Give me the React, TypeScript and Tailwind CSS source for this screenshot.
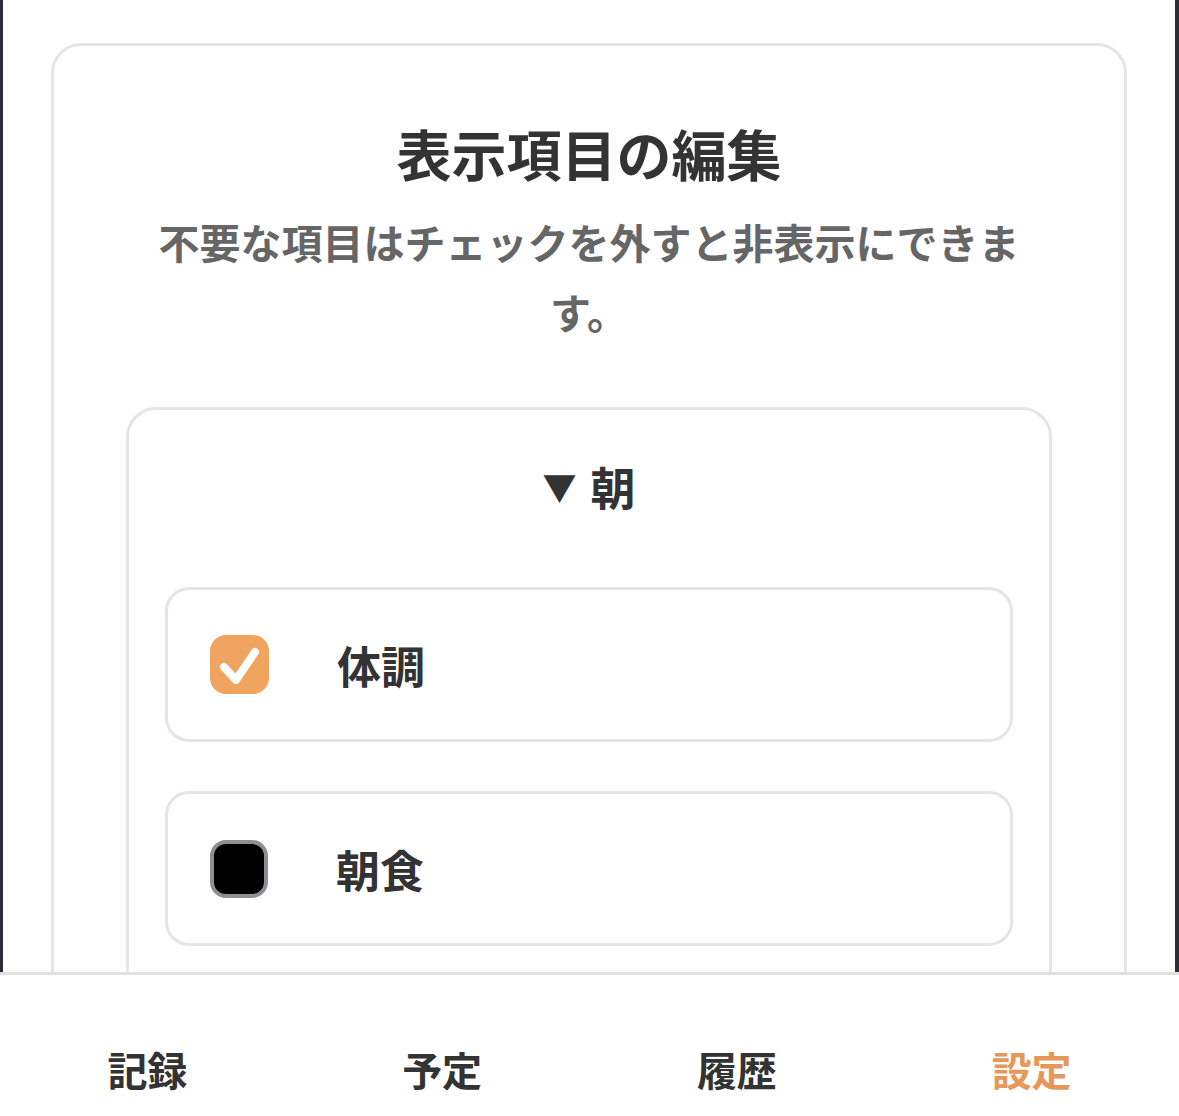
const items = [
  { label: "体調", checked: true },
  { label: "朝食", checked: false },
];

const tabs = [
  { label: "記録", active: false },
  { label: "予定", active: false },
  { label: "履歴", active: false },
  { label: "設定", active: true },
];

const font = { fontFamily: '"Noto Sans CJK JP", "Noto Sans", sans-serif' };

function CheckBox({ checked }: { checked: boolean }) {
  if (checked) {
    return (
      <div className="flex h-[59px] w-[59px] shrink-0 items-center justify-center rounded-[16px] bg-[#f0a45f]">
        <svg width="59" height="59" viewBox="0 0 59 59">
          <path
            d="M14 32 L26 45 L45 17"
            fill="none"
            stroke="#ffffff"
            strokeWidth="8"
            strokeLinecap="round"
            strokeLinejoin="round"
          />
        </svg>
      </div>
    );
  }
  return <div className="h-[58px] w-[58px] shrink-0 rounded-[16px] border-[4px] border-[#8e8e93] bg-black" />;
}

export default function App() {
  return (
    <div className="min-h-[1116px] bg-[#2b2d38] pl-[3px] pr-[4px]" style={font}>
      <div className="min-h-[1116px] bg-white pt-[43px] pb-[200px]">
        <div className="mx-[48px] rounded-[30px] border-[3px] border-[#e5e5e5] px-[72px] pt-[66px] pb-[60px]">
          <h1 className="text-center text-[55px] font-bold leading-[80px] text-[#333333]">表示項目の編集</h1>
          <p className="mt-[14px] px-[8px] text-center text-[41px] font-semibold leading-[70px] text-[#666666]">
            不要な項目はチェックを外すと非表示にできます。
          </p>

          <div className="mt-[61px] rounded-[30px] border-[3px] border-[#e5e5e5] px-[36px] pt-[44px] pb-[50px]">
            <h2 className="flex items-center justify-center gap-[14px] text-[45px] font-bold leading-[66px] text-[#333333]">
              <span className="text-[34px]">▼</span>
              <span>朝</span>
            </h2>
            <div className="mt-[67px] flex flex-col gap-[49px]">
              {items.map((item) => (
                <div
                  key={item.label}
                  className="flex h-[155px] items-center gap-[68px] rounded-[24px] border-[3px] border-[#e5e5e5] pl-[42px]"
                >
                  <CheckBox checked={item.checked} />
                  <span className="text-[44px] font-bold text-[#333333]">{item.label}</span>
                </div>
              ))}
            </div>
          </div>
        </div>
      </div>

      <nav className="fixed bottom-0 left-0 right-0 grid h-[144px] grid-cols-4 border-t-[3px] border-[#e0e0e0] bg-white">
        {tabs.map((tab) => (
          <div
            key={tab.label}
            className={`pt-[64px] text-center text-[40px] font-bold leading-[60px] ${
              tab.active ? "text-[#e8975a]" : "text-[#333333]"
            }`}
          >
            {tab.label}
          </div>
        ))}
      </nav>
    </div>
  );
}
